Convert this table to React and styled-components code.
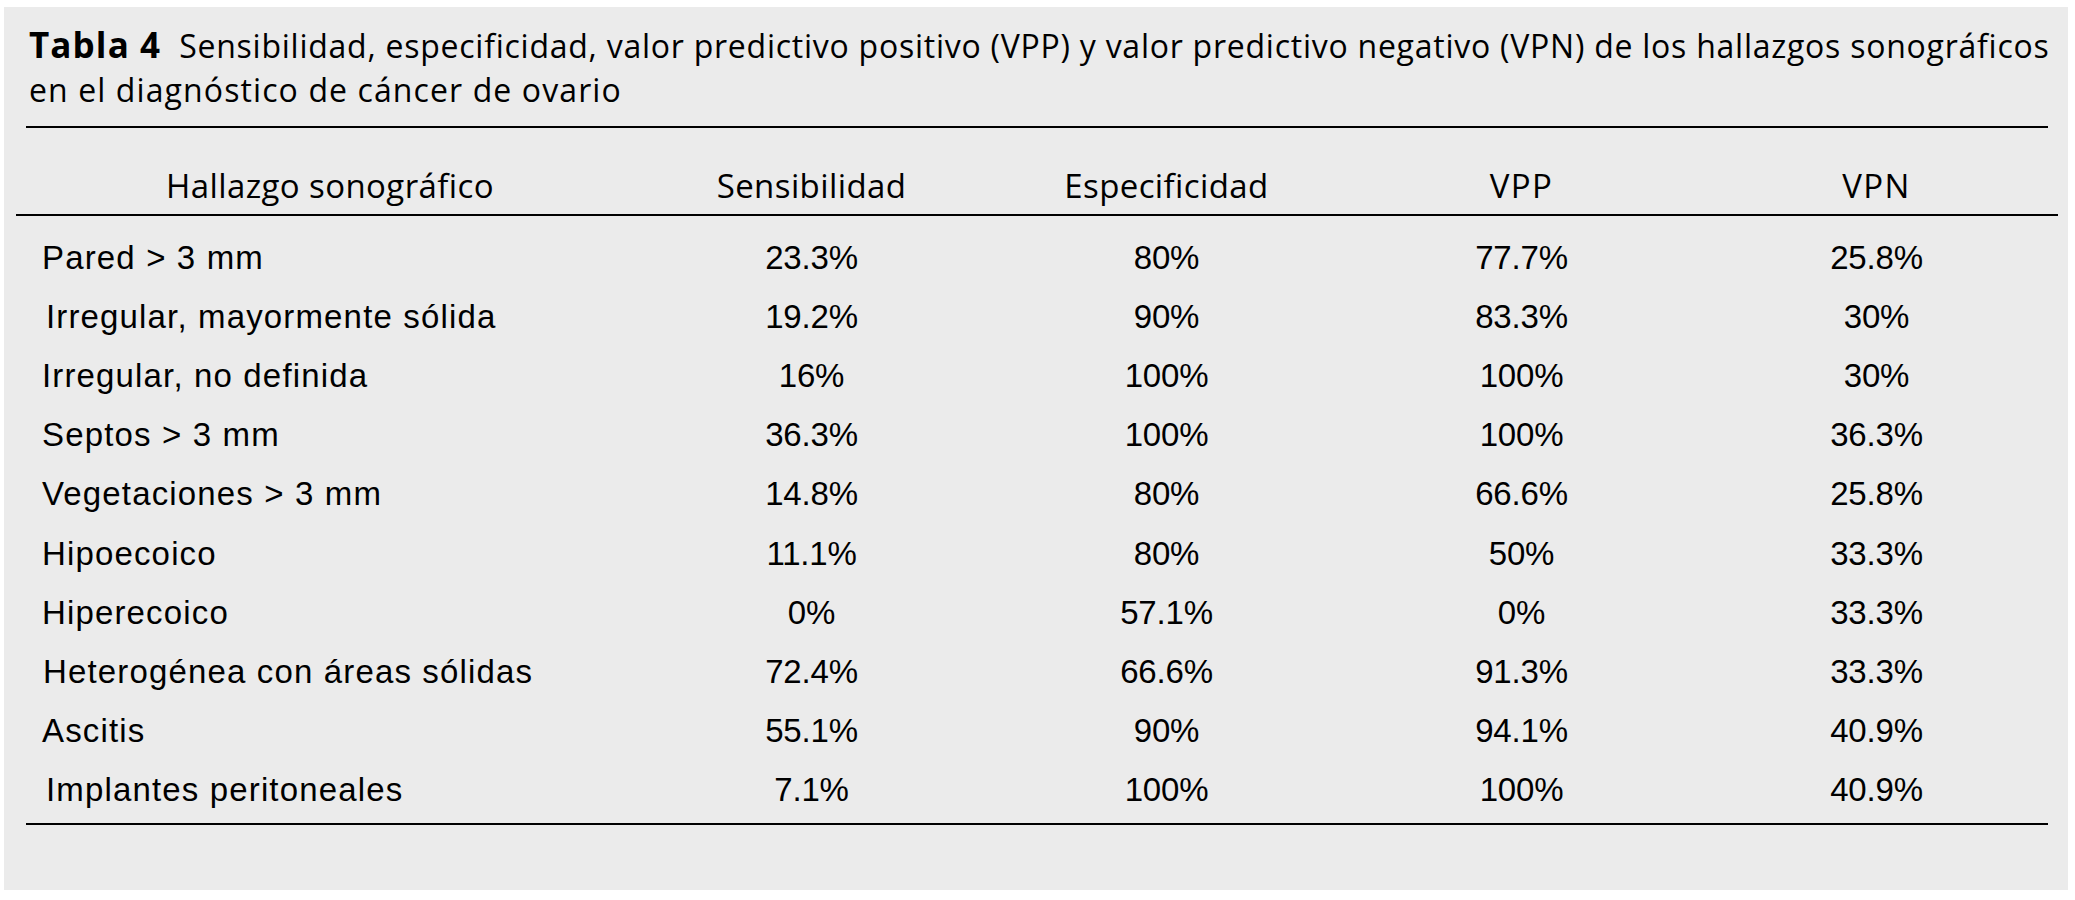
import React from 'react';
import styled, { createGlobalStyle } from 'styled-components';

const GlobalStyle = createGlobalStyle`
  body {
    margin: 0;
    background: #ffffff;
  }
`;

const Panel = styled.div`
  box-sizing: border-box;
  width: 2064px;
  height: 883px;
  margin: 7px 0 0 4px;
  padding: 16px 20px 0 22px;
  background: #ebebeb;
  color: #000;
`;

const Caption = styled.div`
  padding-left: 3px;
  font-family: "Open Sans", "Liberation Sans", sans-serif;
  font-size: 32px;
  line-height: 44px;
  letter-spacing: 0.75px;
  white-space: nowrap;
`;

const CaptionLabel = styled.span`
  font-size: 35px;
  font-weight: 700;
  letter-spacing: 1.1px;
  margin-right: 18px;
`;

const CaptionTail = styled.span`
  letter-spacing: 1.1px;
`;

const Rule = styled.div`
  height: 2px;
  background: #000;
  margin-top: ${p => p.$top || 0}px;
`;

const Grid = styled.div`
  display: grid;
  grid-template-columns: 608px repeat(4, 355px);
  align-items: center;
`;

const HeadRow = styled(Grid)`
  margin: 0 -10px;
  padding: 42px 10px 12px;
  border-bottom: 2px solid #000;
`;

const HeadCell = styled.div`
  text-align: center;
  font-family: "Open Sans", "Liberation Sans", sans-serif;
  font-size: 33px;
  line-height: 32px;
  letter-spacing: ${p => p.$wide ? '1.3px' : '0.4px'};
`;

const Body = styled.div`
  padding: 12px 0 3px;
`;

const Row = styled(Grid)`
  height: 59.2px;
`;

const Label = styled.div`
  padding-left: ${p => 16 + (p.$indent || 0)}px;
  font-family: "Liberation Sans", Arial, sans-serif;
  font-size: 33px;
  letter-spacing: 1.15px;
  white-space: nowrap;
`;

const Value = styled.div`
  text-align: center;
  font-family: "Liberation Sans", Arial, sans-serif;
  font-size: 33px;
  letter-spacing: -0.2px;
`;

const rows = [
  ['Pared > 3 mm', '23.3%', '80%', '77.7%', '25.8%', 0],
  ['Irregular, mayormente sólida', '19.2%', '90%', '83.3%', '30%', 4],
  ['Irregular, no definida', '16%', '100%', '100%', '30%', 0],
  ['Septos > 3 mm', '36.3%', '100%', '100%', '36.3%', 0],
  ['Vegetaciones > 3 mm', '14.8%', '80%', '66.6%', '25.8%', 0],
  ['Hipoecoico', '11.1%', '80%', '50%', '33.3%', 0],
  ['Hiperecoico', '0%', '57.1%', '0%', '33.3%', 0],
  ['Heterogénea con áreas sólidas', '72.4%', '66.6%', '91.3%', '33.3%', 1],
  ['Ascitis', '55.1%', '90%', '94.1%', '40.9%', 0],
  ['Implantes peritoneales', '7.1%', '100%', '100%', '40.9%', 4],
];

export default function App() {
  return (
    <>
      <GlobalStyle />
      <Panel>
        <Caption>
          <CaptionLabel>Tabla 4</CaptionLabel>
          Sensibilidad, especificidad, valor predictivo positivo (VPP) y valor predictivo negativo (VPN) de los hallazgos sonográficos
          <br />
          <CaptionTail>en el diagnóstico de cáncer de ovario</CaptionTail>
        </Caption>
        <Rule $top={14} />
        <HeadRow>
          <HeadCell>Hallazgo sonográfico</HeadCell>
          <HeadCell>Sensibilidad</HeadCell>
          <HeadCell>Especificidad</HeadCell>
          <HeadCell $wide>VPP</HeadCell>
          <HeadCell $wide>VPN</HeadCell>
        </HeadRow>
        <Body>
          {rows.map(([name, sens, esp, vpp, vpn, indent]) => (
            <Row key={name}>
              <Label $indent={indent}>{name}</Label>
              <Value>{sens}</Value>
              <Value>{esp}</Value>
              <Value>{vpp}</Value>
              <Value>{vpn}</Value>
            </Row>
          ))}
        </Body>
        <Rule />
      </Panel>
    </>
  );
}
